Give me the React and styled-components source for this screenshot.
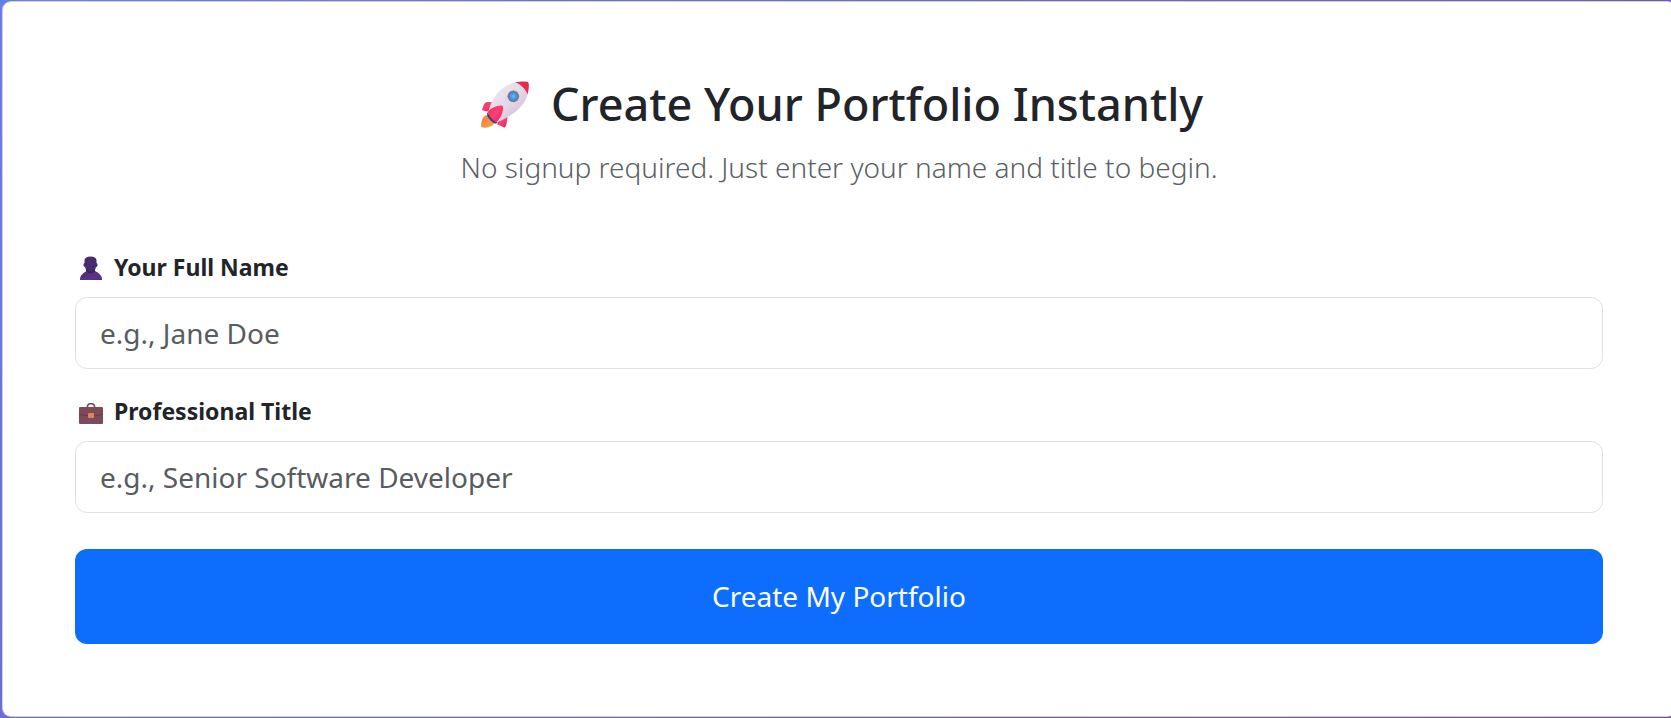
import React from 'react';
import styled, { createGlobalStyle } from 'styled-components';

const GlobalStyle = createGlobalStyle`
  *, *::before, *::after { box-sizing: border-box; }
  body {
    margin: 0;
    overflow-x: hidden;
    background: linear-gradient(135deg, #667eea 0%, #764ba2 100%);
    color: #212529;
    font-family: "Segoe UI", "Noto Sans", "Open Sans", sans-serif;
  }
`;

const Page = styled.main`
  padding: 1px 0 1px 2px;
  overflow: hidden;
`;

const Card = styled.section`
  margin-right: -5px;
  padding: 72px;
  background: #fff;
  border: 1px solid rgba(0, 0, 0, 0.18);
  border-radius: 9px;
`;

const Header = styled.header`
  margin-bottom: 60px;
  text-align: center;
`;

const Title = styled.h1`
  display: flex;
  align-items: center;
  justify-content: center;
  gap: 16px;
  margin: 0 0 12px;
  font-size: 45px;
  font-weight: 500;
  line-height: 60px;
`;

const Lead = styled.p`
  margin: 0;
  color: #5a6066;
  font-size: 28px;
  font-weight: 300;
  line-height: 43px;
`;

const Form = styled.form`
  display: flex;
  flex-direction: column;
  gap: 24px;
`;

const Field = styled.div`
  display: flex;
  flex-direction: column;
  gap: 12px;
`;

const Label = styled.label`
  display: flex;
  align-items: center;
  gap: 7px;
  font-size: 23px;
  font-weight: 700;
  line-height: 36px;
`;

const Input = styled.input`
  width: 100%;
  height: 72px;
  padding: 12px 24px;
  background: #fff;
  border: 1px solid #dee2e6;
  border-radius: 12px;
  color: #212529;
  font: inherit;
  font-size: 28px;
  line-height: 43px;

  &::placeholder { color: #595c5f; opacity: 1; }
  &:focus { outline: 3px solid #86b7fe; }
`;

const SubmitButton = styled.button`
  height: 95px;
  margin-top: 12px;
  padding: 24px;
  background: #0d6efd;
  border: 0;
  border-radius: 12px;
  color: #fff;
  font: inherit;
  font-size: 28px;
  line-height: 43px;
  cursor: pointer;

  &:hover { background: #0b5ed7; }
`;

const Icon = styled.svg`
  flex: none;
  width: ${(p) => p.$size}px;
  height: ${(p) => p.$size}px;
`;

function RocketIcon() {
  return (
    <Icon $size={60} viewBox="42 13 180 180" aria-hidden="true">
      <defs>
        <linearGradient id="hull" x1="0" y1="0" x2="1" y2="1">
          <stop offset="0" stopColor="#efedf1" />
          <stop offset="0.5" stopColor="#e4d9e6" />
          <stop offset="1" stopColor="#c9b4cf" />
        </linearGradient>
        <linearGradient id="fin" x1="0" y1="0" x2="1" y2="1">
          <stop offset="0" stopColor="#e8305a" />
          <stop offset="0.5" stopColor="#ff3f74" />
          <stop offset="1" stopColor="#d81c5c" />
        </linearGradient>
        <linearGradient id="flame" x1="0" y1="0" x2="1" y2="1">
          <stop offset="0" stopColor="#e98048" />
          <stop offset="1" stopColor="#ffa23c" />
        </linearGradient>
        <radialGradient id="glass">
          <stop offset="0" stopColor="#68bdff" />
          <stop offset="1" stopColor="#3b87dc" />
        </radialGradient>
      </defs>
      <path d="M84 134 C66 138 59 151 61 173 C82 177 98 169 104 155 Z" fill="url(#flame)" />
      <path d="M96 97 L75 98 Q70 101 67 109 L63 120 Q64 124 82 125 Z" fill="url(#fin)" />
      <path d="M140 140 L136 165 Q133 175 128 173 L108 164 L115 149 Z" fill="url(#fin)" />
      <path d="M78 128 L110 159 L104 162 Q89 158 79 139 Z" fill="#3d427c" />
      <path d="M82 130 C90 79 126 44 168 37 L202 69 C192 107 156 140 107 158 Z" fill="url(#hull)" />
      <path d="M163 38 C178 35 194 34 201 37 C206 44 203 60 200 74 C193 58 180 45 163 38 Z" fill="#e62c4d" />
      <circle cx="157" cy="80" r="17.5" fill="#767b91" />
      <circle cx="157" cy="80" r="12" fill="url(#glass)" />
      <path d="M80 127 C88 116 111 105 125 108 C130 121 120 145 105 158 C98 154 84 140 80 127 Z" fill="url(#fin)" />
    </Icon>
  );
}

function PersonIcon() {
  return (
    <Icon $size={32} viewBox="0 0 32 32" aria-hidden="true">
      <defs>
        <linearGradient id="bust" x1="0" y1="0" x2="1" y2="1">
          <stop offset="0" stopColor="#4c2b70" />
          <stop offset="0.7" stopColor="#5a378a" />
          <stop offset="1" stopColor="#4b2c75" />
        </linearGradient>
      </defs>
      <path d="M5 29 C5 24 8 22 12 20 H20 C24 22 27 24 27 29 Z" fill="url(#bust)" />
      <path d="M9.500 9 Q10 5.500 15.500 5.500 Q21 5.500 21.500 9 V12 Q23 12 22.500 14.500 Q22 16 21 16 L20 19 V21 H11 V19 L10 16 Q9 16 8.500 14.500 Q8 12 9.500 12 Z" fill="#4b2b70" />
      <path d="M11 18.500 Q15.500 22 20 18.500 V20.500 Q15.500 24 11 20.500 Z" fill="#3d235c" />
    </Icon>
  );
}

function BriefcaseIcon() {
  return (
    <Icon $size={32} viewBox="0 0 32 32" aria-hidden="true">
      <defs>
        <linearGradient id="leather" x1="0" y1="0" x2="0" y2="1">
          <stop offset="0" stopColor="#7d4b53" />
          <stop offset="1" stopColor="#7d4960" />
        </linearGradient>
      </defs>
      <path d="M12.500 12 V11 Q13 8.700 15 8.700 H17 Q19 8.700 19.500 11 V12" fill="none" stroke="#70484c" strokeWidth="1.600" />
      <rect x="4" y="12" width="24" height="17" rx="1" fill="url(#leather)" />
      <path d="M4 18.500 Q9 20 13 20 H19 Q23 20 28 18.500 V19.500 Q23 21 19 21 H13 Q9 21 4 19.500 Z" fill="#653a49" />
      <rect x="13" y="18" width="6" height="5" rx="1" fill="#e18262" />
    </Icon>
  );
}

export default function App() {
  return (
    <>
      <GlobalStyle />
      <Page>
        <Card>
          <Header>
            <Title>
              <RocketIcon />
              Create Your Portfolio Instantly
            </Title>
            <Lead>No signup required. Just enter your name and title to begin.</Lead>
          </Header>
          <Form onSubmit={(e) => e.preventDefault()}>
            <Field>
              <Label htmlFor="full-name">
                <PersonIcon />
                Your Full Name
              </Label>
              <Input id="full-name" type="text" placeholder="e.g., Jane Doe" />
            </Field>
            <Field>
              <Label htmlFor="job-title">
                <BriefcaseIcon />
                Professional Title
              </Label>
              <Input id="job-title" type="text" placeholder="e.g., Senior Software Developer" />
            </Field>
            <SubmitButton type="submit">Create My Portfolio</SubmitButton>
          </Form>
        </Card>
      </Page>
    </>
  );
}
